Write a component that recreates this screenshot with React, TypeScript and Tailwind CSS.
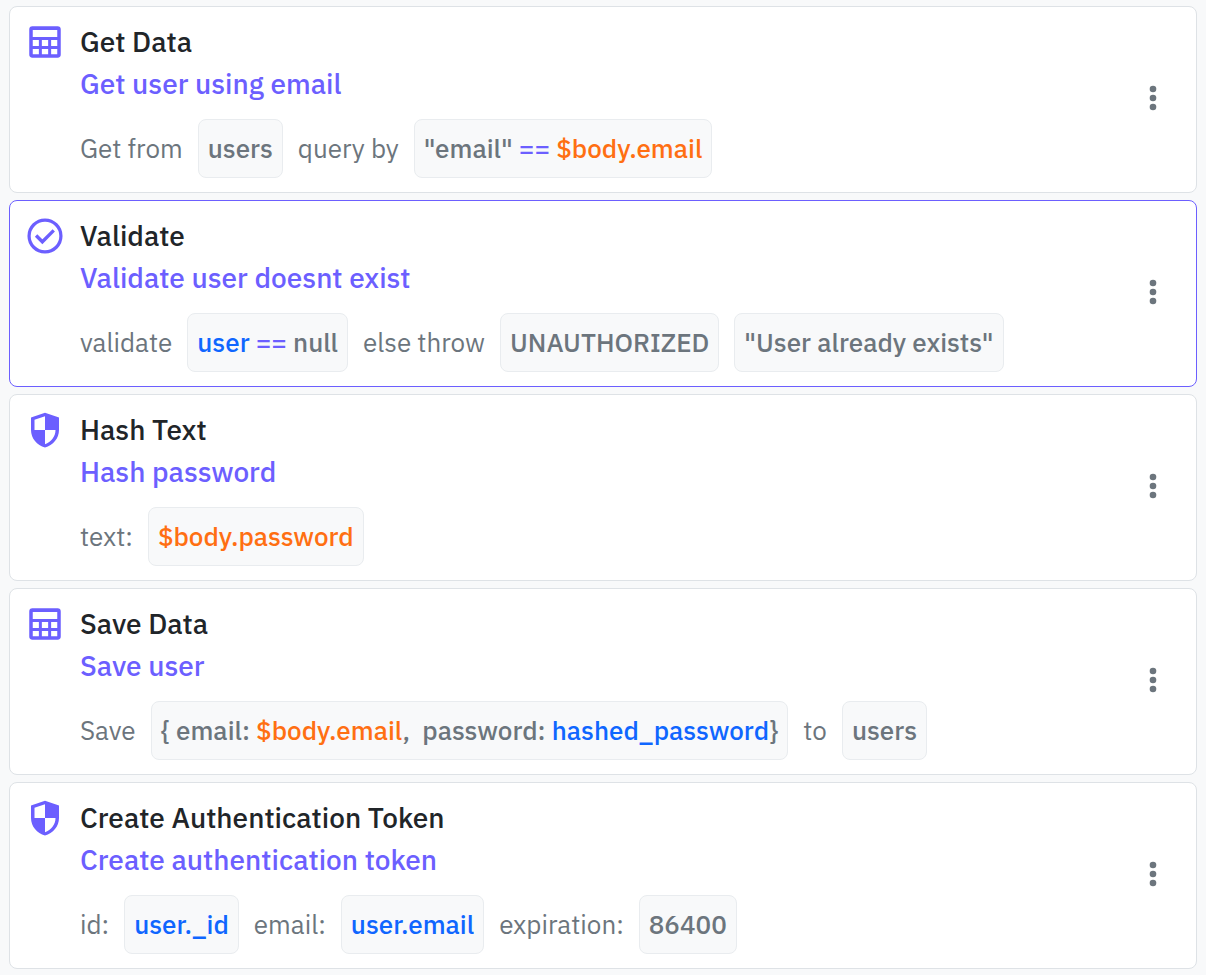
import type { ReactNode } from "react";

function TableIcon() {
  return (
    <svg viewBox="0 0 24 24" className="size-[42px]" fill="currentColor" aria-hidden="true">
      <path
        fillRule="evenodd"
        d="M4.800 3h14.400A1.800 1.800 0 0 1 21 4.800v14.400a1.800 1.800 0 0 1-1.800 1.800H4.800A1.800 1.800 0 0 1 3 19.200V4.800A1.800 1.800 0 0 1 4.800 3ZM5 5.200v4h14v-4H5ZM5 10.900v3.400h3.500v-3.400H5ZM10.200 10.900v3.400h3.600v-3.400h-3.600ZM15.500 10.900v3.400H19v-3.400h-3.500ZM5 16v3h3.500v-3H5ZM10.200 16v3h3.600v-3h-3.600ZM15.500 16v3H19v-3h-3.500Z"
      />
    </svg>
  );
}

function CheckIcon() {
  return (
    <svg viewBox="0 0 24 24" className="size-[42px]" fill="none" stroke="currentColor" aria-hidden="true">
      <circle cx="12" cy="12" r="9.100" strokeWidth="1.850" />
      <path d="M6.900 11.700 10.500 15.300 17 8.800" strokeWidth="1.900" />
    </svg>
  );
}

function ShieldIcon() {
  return (
    <svg viewBox="0 0 24 24" className="size-[42px]" fill="currentColor" aria-hidden="true">
      <path
        fillRule="evenodd"
        d="M12 2.200 20 4.900V12C20 16.800 16.600 20.700 12 22 7.400 20.700 4 16.800 4 12V4.900ZM12 4.100 6 6.100V12H12ZM12 12V20.100C15.500 18.900 18 15.800 18 12Z"
      />
    </svg>
  );
}

function Chip({ children }: { children: ReactNode }) {
  return (
    <span className="rounded-lg border border-[#e9ecef] bg-[#f8f9fa] px-[9px] py-[9px] font-medium whitespace-pre">
      {children}
    </span>
  );
}

const Op = ({ children }: { children: ReactNode }) => <span className="text-[#6c5fff]">{children}</span>;
const Ref = ({ children }: { children: ReactNode }) => <span className="text-[#0f66ff]">{children}</span>;
const Input = ({ children }: { children: ReactNode }) => <span className="text-[#ff6f12]">{children}</span>;

type StepProps = {
  icon: ReactNode;
  title: string;
  description: string;
  selected?: boolean;
  children: ReactNode;
};

function Step({ icon, title, description, selected, children }: StepProps) {
  return (
    <li
      className={`flex items-center rounded-lg border bg-white py-3.5 pr-[22px] pl-3.5 ${
        selected ? "border-[#6c5fff]" : "border-[#dee2e6]"
      }`}
    >
      <div className="flex min-w-0 flex-1 items-start gap-3.5">
        <div className="shrink-0 text-[#6c5fff]">{icon}</div>
        <div className="min-w-0">
          <h2 className="text-[28px] leading-[42px] font-medium text-[#212529]">{title}</h2>
          <p className="text-[28px] leading-[42px] font-medium text-[#6c5fff]">{description}</p>
          <div className="mt-3.5 flex items-center gap-[15px] text-[26px] leading-[39px] font-normal text-[#6c757d]">
            {children}
          </div>
        </div>
      </div>
      <button type="button" aria-label={`${title} options`} className="mb-[3px] shrink-0 text-[#6c757d]">
        <svg viewBox="0 0 42 42" className="size-[42px]" fill="currentColor" aria-hidden="true">
          <circle cx="21" cy="12" r="3.300" />
          <circle cx="21" cy="21" r="3.300" />
          <circle cx="21" cy="30" r="3.300" />
        </svg>
      </button>
    </li>
  );
}

export default function App() {
  return (
    <main className="min-h-screen bg-[#f8f9fa] px-[9px] py-1.5 font-['IBM_Plex_Sans',Roboto,sans-serif]">
      <ul className="flex flex-col gap-[7px]">
        <Step icon={<TableIcon />} title="Get Data" description="Get user using email">
          <span>Get from</span>
          <Chip>users</Chip>
          <span>query by</span>
          <Chip>
            "email" <Op>==</Op> <Input>$body.email</Input>
          </Chip>
        </Step>
        <Step icon={<CheckIcon />} title="Validate" description="Validate user doesnt exist" selected>
          <span>validate</span>
          <Chip>
            <Ref>user</Ref> <Op>==</Op> null
          </Chip>
          <span>else throw</span>
          <Chip>UNAUTHORIZED</Chip>
          <Chip>"User already exists"</Chip>
        </Step>
        <Step icon={<ShieldIcon />} title="Hash Text" description="Hash password">
          <span>text:</span>
          <Chip>
            <Input>$body.password</Input>
          </Chip>
        </Step>
        <Step icon={<TableIcon />} title="Save Data" description="Save user">
          <span>Save</span>
          <Chip>
            {"{ email: "}
            <Input>$body.email</Input>
            {",  password: "}
            <Ref>hashed_password</Ref>
            {"}"}
          </Chip>
          <span>to</span>
          <Chip>users</Chip>
        </Step>
        <Step icon={<ShieldIcon />} title="Create Authentication Token" description="Create authentication token">
          <span>id:</span>
          <Chip>
            <Ref>user._id</Ref>
          </Chip>
          <span>email:</span>
          <Chip>
            <Ref>user.email</Ref>
          </Chip>
          <span>expiration:</span>
          <Chip>86400</Chip>
        </Step>
      </ul>
    </main>
  );
}
